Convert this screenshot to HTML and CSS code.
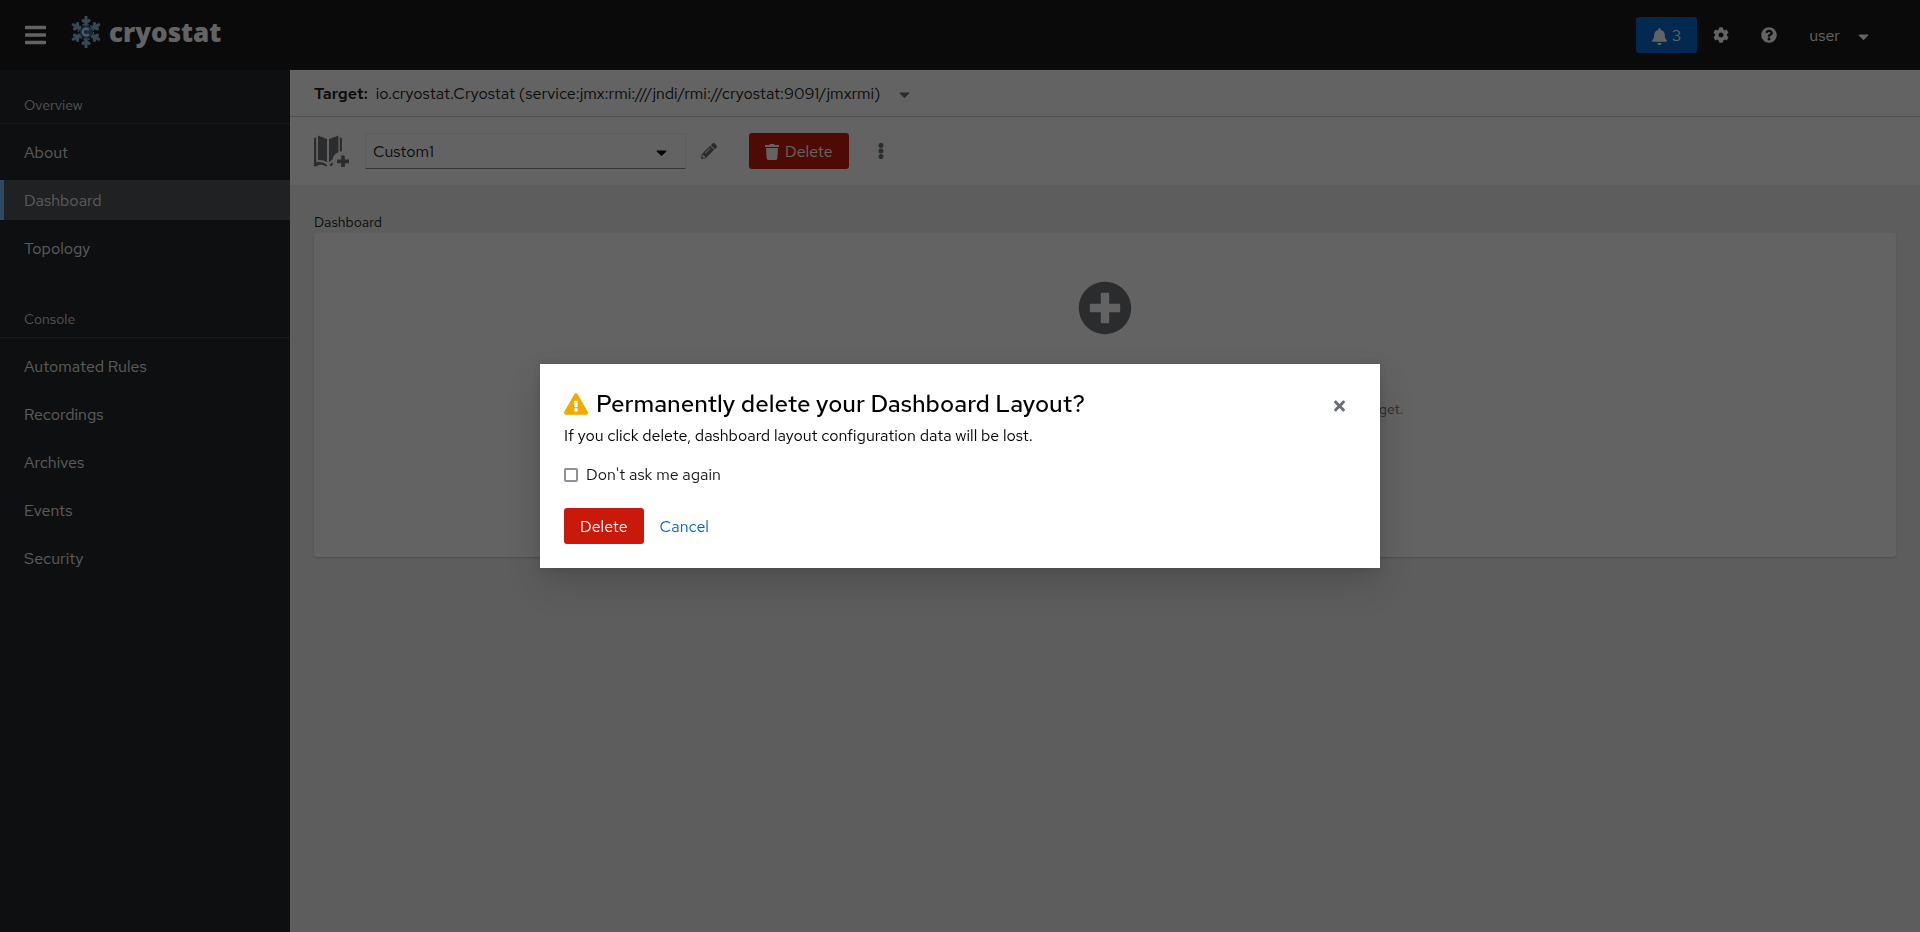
FILE: index.html
```html
<!DOCTYPE html>
<html lang="en">
<head>
<meta charset="utf-8">
<title>Dashboard | Cryostat</title>
<link rel="stylesheet" href="styles.css">
</head>
<body>
<svg class="sprite" aria-hidden="true">
  <symbol id="caret" viewBox="0 0 320 512"><path d="M31.3 192h257.3c17.8 0 26.7 21.5 14.1 34.1L174.1 354.8c-7.8 7.8-20.5 7.8-28.3 0L17.2 226.1C4.6 213.5 13.5 192 31.3 192z"/></symbol>
  <g id="arm">
    <path d="M0-6V-16" stroke-width="3"/>
    <path d="M-4-12.4 0-9 4-12.4" stroke-width="3"/>
  </g>
</svg>
<div class="page">
  <header class="masthead">
    <button class="plain menu" aria-label="Global navigation">
      <svg viewBox="0 0 448 512"><path d="M16 132h416c8.837 0 16-7.163 16-16V76c0-8.837-7.163-16-16-16H16C7.163 60 0 67.163 0 76v40c0 8.837 7.163 16 16 16zm0 160h416c8.837 0 16-7.163 16-16v-40c0-8.837-7.163-16-16-16H16c-8.837 0-16 7.163-16 16v40c0 8.837 7.163 16 16 16zm0 160h416c8.837 0 16-7.163 16-16v-40c0-8.837-7.163-16-16-16H16c-8.837 0-16 7.163-16 16v40c0 8.837 7.163 16 16 16z"/></svg>
    </button>
    <a class="brand" href="#">
      <svg viewBox="-16 -16 32 32" aria-hidden="true">
        <g stroke="#87b9d8" fill="none">
          <use href="#arm"/><use href="#arm" transform="rotate(60)"/><use href="#arm" transform="rotate(120)"/>
          <use href="#arm" transform="rotate(180)"/><use href="#arm" transform="rotate(240)"/><use href="#arm" transform="rotate(300)"/>
        </g>
        <circle r="7.6" fill="none" stroke="#87b9d8" stroke-width="1.4" stroke-dasharray="2.4 1.6"/>
        <circle r="6.4" fill="#2f6f9f"/>
        <path d="M2.8-2.2A3.4 3.4 0 1 0 2.8 2.2" fill="none" stroke="#dceaf3" stroke-width="2.2"/>
      </svg>
      <span>cryostat</span>
    </a>
    <div class="tools">
      <button class="badge" aria-label="3 notifications">
        <svg viewBox="0 0 448 512"><path d="M224 512c35.32 0 63.97-28.65 63.97-64H160.03c0 35.35 28.65 64 63.97 64zm215.39-149.71c-19.32-20.76-55.47-51.99-55.47-154.29 0-77.7-54.48-139.9-127.94-155.16V32c0-17.67-14.32-32-31.98-32s-31.98 14.33-31.98 32v20.84C118.56 68.1 64.08 130.3 64.08 208c0 102.3-36.15 133.53-55.47 154.29-6 6.45-8.66 14.16-8.61 21.71.11 16.4 12.98 32 32.1 32h383.8c19.12 0 32-15.6 32.1-32 .05-7.55-2.61-15.27-8.61-21.71z"/></svg>
        <span>3</span>
      </button>
      <button class="plain tool" aria-label="Settings">
        <svg viewBox="0 0 512 512"><path d="M487.4 315.7l-42.6-24.6c4.3-23.2 4.3-47 0-70.2l42.6-24.6c4.9-2.8 7.1-8.6 5.5-14-11.1-35.6-30-67.8-54.7-94.6-3.8-4.1-10-5.1-14.8-2.3L380.8 110c-17.9-15.4-38.5-27.3-60.8-35.1V25.8c0-5.6-3.9-10.5-9.4-11.7-36.7-8.2-74.3-7.8-109.2 0-5.5 1.2-9.4 6.1-9.4 11.7V75c-22.2 7.9-42.8 19.8-60.8 35.1L88.7 85.5c-4.9-2.8-11-1.9-14.8 2.3-24.7 26.7-43.6 58.9-54.7 94.6-1.7 5.4.6 11.2 5.5 14L67.3 221c-4.3 23.2-4.3 47 0 70.2l-42.6 24.6c-4.9 2.8-7.1 8.6-5.5 14 11.1 35.6 30 67.8 54.7 94.6 3.8 4.1 10 5.1 14.8 2.3l42.6-24.6c17.9 15.4 38.5 27.3 60.8 35.1v49.2c0 5.6 3.9 10.5 9.4 11.7 36.7 8.2 74.3 7.8 109.2 0 5.5-1.2 9.4-6.1 9.4-11.7v-49.2c22.2-7.9 42.8-19.8 60.8-35.1l42.6 24.6c4.9 2.8 11 1.9 14.8-2.3 24.7-26.7 43.6-58.9 54.7-94.6 1.5-5.5-.7-11.3-5.6-14.1zM256 336c-44.1 0-80-35.9-80-80s35.9-80 80-80 80 35.9 80 80-35.9 80-80 80z"/></svg>
      </button>
      <button class="plain tool" aria-label="Help">
        <svg viewBox="0 0 512 512"><path d="M504 256c0 136.997-111.043 248-248 248S8 392.997 8 256C8 119.083 119.043 8 256 8s248 111.083 248 248zM262.655 90c-54.497 0-89.255 22.957-116.549 63.758-3.536 5.286-2.353 12.415 2.715 16.258l34.699 26.31c5.205 3.947 12.621 3.008 16.665-2.122 17.864-22.658 30.113-35.797 57.303-35.797 20.429 0 45.698 13.148 45.698 32.958 0 14.976-12.363 22.667-32.534 33.976C247.128 238.528 216 254.941 216 296v4c0 6.627 5.373 12 12 12h56c6.627 0 12-5.373 12-12v-1.333c0-28.462 83.186-29.647 83.186-106.667 0-58.002-60.165-102-116.531-102zM256 338c-25.365 0-46 20.635-46 46 0 25.364 20.635 46 46 46s46-20.636 46-46c0-25.365-20.635-46-46-46z"/></svg>
      </button>
      <button class="plain user"><span>user</span><svg class="caret"><use href="#caret"/></svg></button>
    </div>
  </header>
  <div class="body">
    <nav class="sidebar" aria-label="Global">
      <section>
        <h2>Overview</h2>
        <ul>
          <li><a href="#">About</a></li>
          <li><a class="current" href="#" aria-current="page">Dashboard</a></li>
          <li><a href="#">Topology</a></li>
        </ul>
      </section>
      <section>
        <h2>Console</h2>
        <ul>
          <li><a href="#">Automated Rules</a></li>
          <li><a href="#">Recordings</a></li>
          <li><a href="#">Archives</a></li>
          <li><a href="#">Events</a></li>
          <li><a href="#">Security</a></li>
        </ul>
      </section>
    </nav>
    <main class="main">
      <div class="target">
        <strong>Target:</strong>
        <button class="plain target-toggle"><span>io.cryostat.Cryostat (service:jmx:rmi:///jndi/rmi://cryostat:9091/jmxrmi)</span><svg class="caret"><use href="#caret"/></svg></button>
      </div>
      <div class="toolbar">
        <button class="plain catalog" aria-label="Add card">
          <svg viewBox="1 0 36 32">
            <path d="M5 .4 14 4V27.4C11 25.4 8 24.8 5 25.2zM16 4 25.4.4V17.2C22 18.6 20 21 19.6 24.6 18.4 25.2 17 26.2 16 27.4z"/>
            <path d="M1 3.2 3.200 2.200V27.400C7.400 26.400 11 27.400 14.400 30.200L13 31.600C9.400 29 6 29 2.400 31.800L1 31zM26.800 2.200 29 3.200V16.200L26.800 16.600zM16.400 29.600 19.400 27.400 20.200 29.400 18 31.400z"/>
            <path d="M28.200 20.600H31.800V24.600H36V28.200H31.800V32H28.200V28.200H24V24.600H28.200z"/>
          </svg>
        </button>
        <button class="plain select"><span>Custom1</span><svg class="caret"><use href="#caret"/></svg></button>
        <button class="plain edit" aria-label="Rename layout">
          <svg viewBox="0 0 512 512"><path d="M497.9 142.1l-46.1 46.1c-4.7 4.7-12.3 4.7-17 0l-111-111c-4.7-4.7-4.7-12.3 0-17l46.1-46.1c18.7-18.7 49.1-18.7 67.9 0l60.1 60.1c18.8 18.7 18.8 49.1 0 67.9zM284.2 99.8L21.6 362.4.4 483.9c-2.9 16.4 11.4 30.6 27.8 27.8l121.5-21.3 262.6-262.6c4.7-4.7 4.7-12.3 0-17l-111-111c-4.8-4.7-12.4-4.7-17.1 0zM124.1 339.9c-5.5-5.5-5.5-14.3 0-19.8l154-154c5.5-5.5 14.3-5.5 19.8 0s5.5 14.3 0 19.8l-154 154c-5.5 5.5-14.3 5.5-19.8 0zM88 424h48v36.3l-64.5 11.3-31.1-31.1L51.7 376H88v48z"/></svg>
        </button>
        <button class="danger">
          <svg viewBox="0 0 448 512"><path d="M432 32H312l-9.400-18.700A24 24 0 0 0 281.100 0H166.800a23.720 23.720 0 0 0-21.400 13.300L136 32H16A16 16 0 0 0 0 48v32a16 16 0 0 0 16 16h416a16 16 0 0 0 16-16V48a16 16 0 0 0-16-16zM32 128 53.200 467a48 48 0 0 0 47.900 45h245.800a48 48 0 0 0 47.900-45L416 128z"/></svg>
          <span>Delete</span>
        </button>
        <button class="plain kebab" aria-label="More actions">
          <svg viewBox="0 0 6 16"><circle cx="3" cy="2.400" r="2.500"/><circle cx="3" cy="8" r="2.500"/><circle cx="3" cy="13.600" r="2.500"/></svg>
        </button>
      </div>
      <div class="content">
        <h1>Dashboard</h1>
        <div class="card">
          <svg viewBox="0 0 512 512" aria-hidden="true"><path d="M256 8C119 8 8 119 8 256s111 248 248 248 248-111 248-248S393 8 256 8zm144 276c0 6.600-5.400 12-12 12h-92v92c0 6.600-5.400 12-12 12h-56c-6.600 0-12-5.400-12-12v-92h-92c-6.600 0-12-5.400-12-12v-56c0-6.600 5.400-12 12-12h92v-92c0-6.600 5.400-12 12-12h56c6.600 0 12 5.400 12 12v92h92c6.600 0 12 5.400 12 12v56z"/></svg>
          <h2>Add a new card</h2>
          <p>Cards added to this Dashboard layout appear here. The content depends on the selected target.</p>
          <button class="primary">Add</button>
        </div>
      </div>
    </main>
  </div>
</div>
<div class="backdrop">
  <div class="modal" role="dialog" aria-modal="true" aria-labelledby="modal-title" aria-describedby="modal-desc">
    <div class="modal-head">
      <h1 id="modal-title">
        <svg viewBox="0 0 576 512" aria-hidden="true"><path d="M569.517 440.013C587.975 472.007 564.806 512 527.940 512H48.054c-36.937 0-59.999-40.055-41.577-71.987L246.423 23.985c18.467-32.009 64.720-31.951 83.154 0l239.940 416.028zM288 354c-25.405 0-46 20.595-46 46s20.595 46 46 46 46-20.595 46-46-20.595-46-46-46zm-43.673-165.346l7.418 136c.347 6.364 5.609 11.346 11.982 11.346h48.546c6.373 0 11.635-4.982 11.982-11.346l7.418-136c.375-6.874-5.098-12.654-11.982-12.654h-63.383c-6.884 0-12.356 5.780-11.981 12.654z"/></svg>
        <span>Permanently delete your Dashboard Layout?</span>
      </h1>
      <button class="plain close" aria-label="Close">
        <svg viewBox="0 0 352 512"><path d="M242.720 256l100.070-100.070c12.280-12.280 12.280-32.190 0-44.480l-22.240-22.240c-12.280-12.280-32.190-12.280-44.480 0L176 189.280 75.930 89.210c-12.280-12.280-32.190-12.280-44.480 0L9.210 111.450c-12.280 12.280-12.280 32.190 0 44.480L109.280 256 9.210 356.070c-12.280 12.280-12.280 32.190 0 44.480l22.240 22.240c12.280 12.280 32.200 12.280 44.480 0L176 322.720l100.070 100.070c12.280 12.280 32.200 12.280 44.480 0l22.240-22.240c12.280-12.280 12.280-32.190 0-44.480L242.720 256z"/></svg>
      </button>
    </div>
    <p id="modal-desc">If you click delete, dashboard layout configuration data will be lost.</p>
    <div class="check">
      <input type="checkbox" id="dont-ask">
      <label for="dont-ask">Don't ask me again</label>
    </div>
    <div class="actions">
      <button class="danger">Delete</button>
      <button class="link">Cancel</button>
    </div>
  </div>
</div>
</body>
</html>
```
FILE: styles.css
```css
* { box-sizing: border-box; }
body {
  margin: 0;
  color: #151515;
  background: #f0f0f0;
  font: 16px/24px "Red Hat Text", "Lato", "Liberation Sans", sans-serif;
}
h1, h2, p, ul { margin: 0; padding: 0; font-weight: 400; }
ul { list-style: none; }
a { color: inherit; text-decoration: none; }
button { font: inherit; cursor: pointer; border: 0; border-radius: 3px; }
svg { display: block; fill: currentColor; flex: none; }
.sprite { position: absolute; width: 0; height: 0; }
.plain { background: none; color: #6a6e73; padding: 0; }
.caret { width: 11px; height: 17px; }

.page { display: flex; flex-direction: column; min-height: 100vh; }
.masthead {
  display: flex;
  align-items: center;
  height: 70px;
  padding: 0 40px 0 24px;
  background: #151515;
  color: #fff;
}
.masthead .plain { color: #fff; }
.menu { padding: 0 2px 0 1px; }
.menu svg { width: 21px; height: 24px; }
.brand { display: flex; align-items: center; gap: 7px; margin-left: 22px; padding-bottom: 6px; }
.brand svg { width: 32px; height: 32px; }
.brand span { font: 800 26px/32px "Open Sans", sans-serif; }
.tools { display: flex; align-items: center; margin-left: auto; }
.badge {
  display: flex;
  align-items: center;
  gap: 5px;
  padding: 7px 16px 5px;
  background: #06c;
  color: #fff;
}
.badge svg { width: 15px; height: 17px; }
.tool { padding: 10px 16px; }
.tool svg { width: 16px; height: 16px; }
.user { display: flex; align-items: center; gap: 18px; padding: 7px 11px 5px 16px; }

.body { display: flex; flex: 1; }
.sidebar { width: 290px; padding-top: 25px; background: #212427; color: #fff; }
.sidebar section { margin-bottom: 41px; }
.sidebar h2 {
  padding: 0 24px 7px;
  border-bottom: 1px solid #3c3f42;
  color: #d2d2d2;
  font-size: 14px;
  line-height: 21px;
}
.sidebar li { margin-top: 8px; }
.sidebar a { display: block; padding: 9px 24px 7px; color: #e8e8e8; }
.sidebar .current {
  padding-left: 20px;
  border-left: 4px solid #73bcf7;
  background: #4f5255;
}

.main { flex: 1; min-width: 0; }
.target {
  display: flex;
  gap: 8px;
  padding: 12px 24px 10px;
  background: #fff;
  border-bottom: 1px solid #d2d2d2;
}
.target strong { font-weight: 600; }
.target-toggle { display: flex; align-items: center; gap: 18px; color: #6a6e73; }
.target-toggle span { color: #151515; }
.toolbar { display: flex; align-items: center; padding: 16px 24px; background: #fff; }
.catalog svg { width: 36px; height: 36px; }
.select {
  display: flex;
  align-items: center;
  justify-content: space-between;
  width: 321px;
  height: 36px;
  margin: 0 15px;
  padding: 2px 18px 0 7px;
  color: #151515;
  border: 1px solid #f0f0f0;
  border-bottom-color: #8a8d90;
  border-radius: 0;
}
.select .caret { color: #000; }
.edit svg { width: 16px; height: 16px; }
.danger {
  display: flex;
  align-items: center;
  gap: 6px;
  padding: 7px 16px 5px;
  background: #c9190b;
  color: #fff;
}
.toolbar .danger { margin: 0 29px 0 32px; }
.danger svg { width: 14px; height: 16px; }
.kebab svg { width: 6px; height: 16px; }

.content { padding: 27px 24px; }
.content h1 { font-size: 14px; line-height: 21px; }
.card {
  display: flex;
  flex-direction: column;
  align-items: center;
  padding: 48px 32px 77px;
  background: #fff;
  color: #6a6e73;
  text-align: center;
  border-radius: 3px;
  box-shadow: 0 1px 2px rgba(3, 3, 3, .2);
}
.card svg { width: 54px; height: 54px; }
.card h2 { margin-top: 26px; font-size: 20px; line-height: 30px; color: #151515; }
.card p { margin-top: 8px; font-size: 14px; line-height: 21px; }
.primary { margin-top: 24px; padding: 6px 16px; background: #06c; color: #fff; }

.backdrop {
  position: fixed;
  inset: 0;
  display: flex;
  align-items: center;
  justify-content: center;
  background: rgba(3, 3, 3, .62);
}
.modal {
  width: 840px;
  max-width: 95%;
  padding: 24px;
  background: #fff;
  box-shadow: 0 16px 32px rgba(3, 3, 3, .16), 0 0 8px rgba(3, 3, 3, .1);
}
.modal-head { display: flex; justify-content: space-between; align-items: center; }
.modal-head h1 {
  display: flex;
  align-items: center;
  gap: 8px;
  font: 500 24px/32px "Red Hat Text", "Lato", sans-serif;
  color: #000;
}
.modal-head svg { width: 24px; height: 22px; color: #f0ab00; }
.modal-head .close { padding: 4px 11px 0; }
.modal-head .close svg { width: 11px; height: 16px; color: #6a6e73; }
.modal p { margin-top: 4px; color: #000; }
.check { display: flex; align-items: center; gap: 8px; margin-top: 15px; }
.check input {
  appearance: none;
  width: 14px;
  height: 14px;
  margin: 0;
  border: 2px solid #8f8f9d;
  border-radius: 2px;
  background: #fff;
}
.check input:checked { background: #06c; }
.actions { display: flex; margin-top: 21px; }
.link { padding: 7px 16px 5px; background: none; color: #06c; }
```
